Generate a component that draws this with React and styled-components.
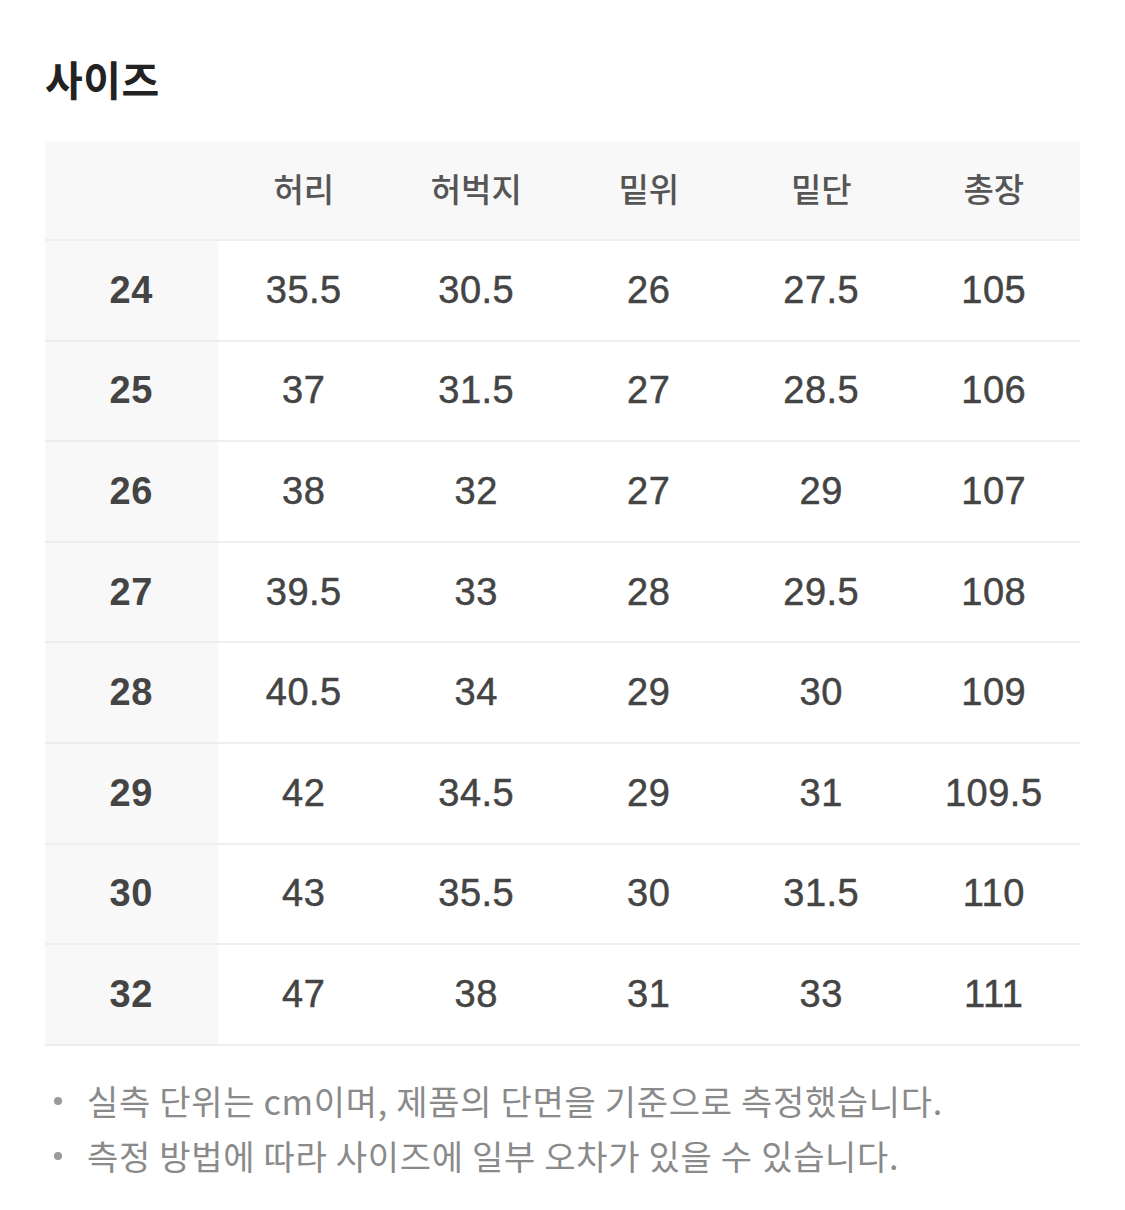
import React from 'react';
import styled, { createGlobalStyle } from 'styled-components';

const GlobalStyle = createGlobalStyle`
  body {
    margin: 0;
    background: #fff;
    font-family: "Liberation Sans", "Noto Sans CJK KR", sans-serif;
  }
`;

const Page = styled.div`
  padding: 56px 45px 40px;
`;

const Title = styled.h2`
  margin: 0 0 40px;
  font-family: "Noto Sans CJK KR", sans-serif;
  font-size: 41px;
  font-weight: 700;
  line-height: 45px;
  color: #222;
  letter-spacing: 0.5px;
`;

const Table = styled.div`
  display: flex;
  flex-direction: column;
`;

const Row = styled.div`
  display: grid;
  grid-template-columns: repeat(6, 1fr);
  box-sizing: border-box;
  border-bottom: 2px solid #eeeeee;
  background: ${(p) => (p.$head ? '#f8f8f8' : '#fff')};
  height: ${(p) => (p.$head ? '100px' : '100.6px')};
`;

const Cell = styled.div`
  display: flex;
  align-items: center;
  justify-content: center;
  font-size: 38px;
  letter-spacing: 0.5px;
  color: #444;
  -webkit-text-stroke: ${(p) => (p.$side ? '0' : '0.5px #444')};
  background: ${(p) => (p.$side ? '#f8f8f8' : 'transparent')};
  font-weight: ${(p) => (p.$side ? 700 : 400)};
`;

const HeadCell = styled.div`
  display: flex;
  align-items: center;
  justify-content: center;
  font-family: "Noto Sans CJK KR", sans-serif;
  font-size: 33px;
  font-weight: 500;
  color: #555;
  padding-bottom: 4px;
`;

const Notes = styled.ul`
  list-style: none;
  margin: 27px 0 0;
  padding: 0;
`;

const Note = styled.li`
  position: relative;
  padding-left: 42px;
  font-family: "Noto Sans CJK KR", sans-serif;
  font-size: 34px;
  line-height: 55px;
  color: #8a8a8a;
  letter-spacing: 0.7px;

  &::before {
    content: '';
    position: absolute;
    left: 9px;
    top: 24px;
    width: 8px;
    height: 8px;
    border-radius: 50%;
    background: #9a9a9a;
  }
`;

const heads = ['허리', '허벅지', '밑위', '밑단', '총장'];

const rows = [
  ['24', '35.5', '30.5', '26', '27.5', '105'],
  ['25', '37', '31.5', '27', '28.5', '106'],
  ['26', '38', '32', '27', '29', '107'],
  ['27', '39.5', '33', '28', '29.5', '108'],
  ['28', '40.5', '34', '29', '30', '109'],
  ['29', '42', '34.5', '29', '31', '109.5'],
  ['30', '43', '35.5', '30', '31.5', '110'],
  ['32', '47', '38', '31', '33', '111'],
];

const App = () => (
  <Page>
    <GlobalStyle />
    <Title>사이즈</Title>
    <Table>
      <Row $head>
        <HeadCell />
        {heads.map((h) => (
          <HeadCell key={h}>{h}</HeadCell>
        ))}
      </Row>
      {rows.map((r) => (
        <Row key={r[0]}>
          {r.map((v, i) => (
            <Cell key={i} $side={i === 0}>
              {v}
            </Cell>
          ))}
        </Row>
      ))}
    </Table>
    <Notes>
      <Note>실측 단위는 cm이며, 제품의 단면을 기준으로 측정했습니다.</Note>
      <Note>측정 방법에 따라 사이즈에 일부 오차가 있을 수 있습니다.</Note>
    </Notes>
  </Page>
);

export default App;
